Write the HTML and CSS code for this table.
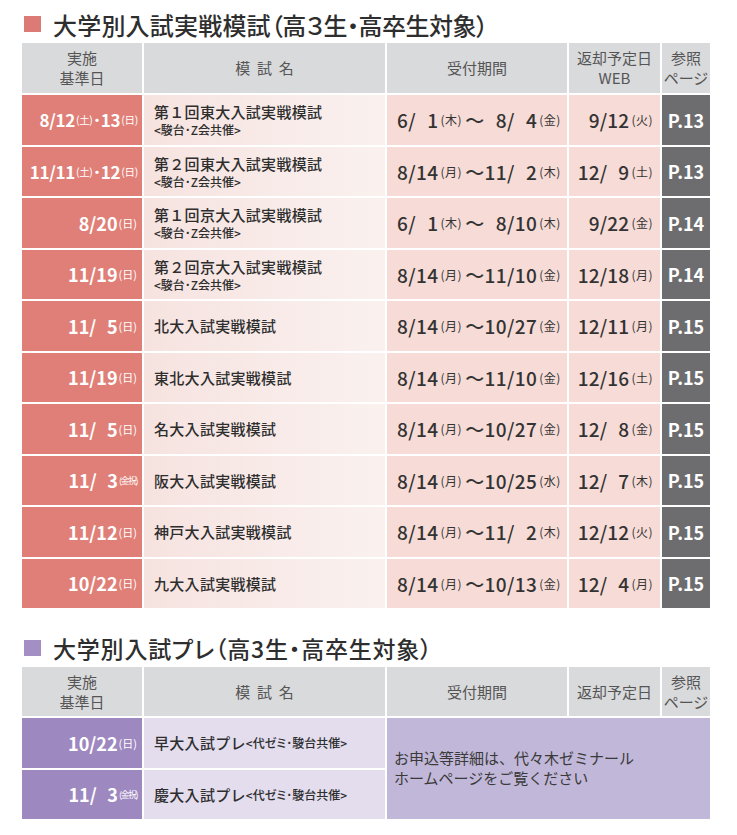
FILE: index.html
```html
<!DOCTYPE html>
<html lang="ja">
<head>
<meta charset="utf-8">
<link rel="stylesheet" href="styles.css">
</head>
<body>
<h2 class="title"><span class="sq sq-red"></span>大学別入試実戦模試<span class="paren">（高３生・高卒生対象）</span></h2>
<div class="grid grid-red">
  <div class="hd">実施<br>基準日</div>
  <div class="hd">模&nbsp;&nbsp;試&nbsp;&nbsp;名</div>
  <div class="hd">受付期間</div>
  <div class="hd">返却予定日<br>WEB</div>
  <div class="hd">参照<br>ページ</div>

  <div class="dt long">8/12<small>(土)</small>･13<small>(日)</small></div>
  <div class="nm"><b>第１回東大入試実戦模試</b><small>&lt;駿台･Z会共催&gt;</small></div>
  <div class="rc">6/&#8199;1<small>(木)</small>～&#8199;8/&#8199;4<small>(金)</small></div>
  <div class="rt">9/12<small>(火)</small></div>
  <div class="pg">P.13</div>

  <div class="dt long">11/11<small>(土)</small>･12<small>(日)</small></div>
  <div class="nm"><b>第２回東大入試実戦模試</b><small>&lt;駿台･Z会共催&gt;</small></div>
  <div class="rc">8/14<small>(月)</small>～11/&#8199;2<small>(木)</small></div>
  <div class="rt">12/&#8199;9<small>(土)</small></div>
  <div class="pg">P.13</div>

  <div class="dt">8/20<small>(日)</small></div>
  <div class="nm"><b>第１回京大入試実戦模試</b><small>&lt;駿台･Z会共催&gt;</small></div>
  <div class="rc">6/&#8199;1<small>(木)</small>～&#8199;8/10<small>(木)</small></div>
  <div class="rt">9/22<small>(金)</small></div>
  <div class="pg">P.14</div>

  <div class="dt">11/19<small>(日)</small></div>
  <div class="nm"><b>第２回京大入試実戦模試</b><small>&lt;駿台･Z会共催&gt;</small></div>
  <div class="rc">8/14<small>(月)</small>～11/10<small>(金)</small></div>
  <div class="rt">12/18<small>(月)</small></div>
  <div class="pg">P.14</div>

  <div class="dt">11/&#8199;5<small>(日)</small></div>
  <div class="nm"><b>北大入試実戦模試</b></div>
  <div class="rc">8/14<small>(月)</small>～10/27<small>(金)</small></div>
  <div class="rt">12/11<small>(月)</small></div>
  <div class="pg">P.15</div>

  <div class="dt">11/19<small>(日)</small></div>
  <div class="nm"><b>東北大入試実戦模試</b></div>
  <div class="rc">8/14<small>(月)</small>～11/10<small>(金)</small></div>
  <div class="rt">12/16<small>(土)</small></div>
  <div class="pg">P.15</div>

  <div class="dt">11/&#8199;5<small>(日)</small></div>
  <div class="nm"><b>名大入試実戦模試</b></div>
  <div class="rc">8/14<small>(月)</small>～10/27<small>(金)</small></div>
  <div class="rt">12/&#8199;8<small>(金)</small></div>
  <div class="pg">P.15</div>

  <div class="dt">11/&#8199;3<small class="cx">(金祝)</small></div>
  <div class="nm"><b>阪大入試実戦模試</b></div>
  <div class="rc">8/14<small>(月)</small>～10/25<small>(水)</small></div>
  <div class="rt">12/&#8199;7<small>(木)</small></div>
  <div class="pg">P.15</div>

  <div class="dt">11/12<small>(日)</small></div>
  <div class="nm"><b>神戸大入試実戦模試</b></div>
  <div class="rc">8/14<small>(月)</small>～11/&#8199;2<small>(木)</small></div>
  <div class="rt">12/12<small>(火)</small></div>
  <div class="pg">P.15</div>

  <div class="dt">10/22<small>(日)</small></div>
  <div class="nm"><b>九大入試実戦模試</b></div>
  <div class="rc">8/14<small>(月)</small>～10/13<small>(金)</small></div>
  <div class="rt">12/&#8199;4<small>(月)</small></div>
  <div class="pg">P.15</div>
</div>

<h2 class="title title2"><span class="sq sq-purple"></span>大学別入試プレ（高3生・高卒生対象）</h2>
<div class="grid grid-purple">
  <div class="hd">実施<br>基準日</div>
  <div class="hd">模&nbsp;&nbsp;試&nbsp;&nbsp;名</div>
  <div class="hd">受付期間</div>
  <div class="hd">返却予定日</div>
  <div class="hd">参照<br>ページ</div>

  <div class="dt">10/22<small>(日)</small></div>
  <div class="nm nm-inline"><b>早大入試プレ</b><small>&lt;代ゼミ･駿台共催&gt;</small></div>
  <div class="merged">お申込等詳細は、代々木ゼミナール<br>ホームページをご覧ください</div>

  <div class="dt">11/&#8199;3<small class="cx">(金祝)</small></div>
  <div class="nm nm-inline"><b>慶大入試プレ</b><small>&lt;代ゼミ･駿台共催&gt;</small></div>
</div>
</body>
</html>
```
FILE: styles.css
```css
* { box-sizing: border-box; }
html, body { margin: 0; padding: 0; background: #ffffff; }
body {
  width: 737px;
  padding: 8px 0 0 22px;
  font-family: "Noto Sans CJK JP", "Noto Sans", sans-serif;
  color: #333333;
}
.title {
  display: flex;
  align-items: center;
  margin: 0 0 3px 0;
  height: 32px;
  font-size: 24px;
  font-weight: 500;
  color: #2e2e2e;
  letter-spacing: 0.2px;
  white-space: nowrap;
}
.title .paren { font-feature-settings: "palt"; letter-spacing: -0.5px; }
.title2 {
  margin-top: 24px;
  font-size: 23px;
  letter-spacing: 0.8px;
  font-feature-settings: "palt";
}
.sq {
  display: inline-block;
  width: 17px;
  height: 16px;
  margin: 0 12px 0 2px;
}
.sq-red { background: #dc7b75; }
.sq-purple { background: #a38fc4; }

.grid {
  display: grid;
  width: 688px;
  grid-template-columns: 120px 241px 180px 91px 48px;
  gap: 2px;
}
.grid-red { grid-template-rows: 50px repeat(10, 49.5px); }
.grid-purple { grid-template-rows: 49px 49.5px 49.5px; }

.hd {
  background: #d9dadc;
  color: #555555;
  font-size: 15px;
  line-height: 20px;
  font-weight: 400;
  display: flex;
  align-items: center;
  justify-content: center;
  text-align: center;
}
.dt {
  color: #ffffff;
  font-size: 18px;
  font-weight: 700;
  display: flex;
  align-items: center;
  justify-content: flex-end;
  padding-right: 5px;
  white-space: nowrap;
}
.dt small { font-size: 11px; font-weight: 400; margin-left: 1px; }
.dt small.cx { font-size: 9px; letter-spacing: -1.5px; }
.dt.long { font-size: 17px; letter-spacing: -0.3px; padding-right: 4px; }
.dt.long small { font-size: 10.5px; letter-spacing: -0.3px; }
.grid-red .dt { background: #e07f77; }
.grid-purple .dt { background: #9e88c0; }

.nm {
  display: flex;
  flex-direction: column;
  justify-content: center;
  padding-left: 10px;
  color: #2e2e2e;
  white-space: nowrap;
}
.grid-red .nm { background: linear-gradient(to right, #f6e3e0, #faf1ef); }
.nm b { font-size: 15px; font-weight: 500; line-height: 19px; letter-spacing: 0.3px; }
.nm small { font-size: 12px; font-weight: 500; line-height: 15px; margin-top: 1px; font-feature-settings: "palt"; }
.nm-inline { flex-direction: row; align-items: center; justify-content: flex-start; }
.nm-inline small { font-size: 12px; margin-top: 0; }
.grid-purple .nm { background: #e3ddee; }

.rc, .rt {
  background: #f6dbd6;
  display: flex;
  align-items: center;
  font-size: 19px;
  font-weight: 500;
  color: #333333;
  white-space: nowrap;
}
.rc { padding-left: 10px; letter-spacing: 0.4px; }
.rt { justify-content: flex-end; padding-right: 7px; letter-spacing: 0.2px; }
.rc small, .rt small { font-size: 12px; font-weight: 400; margin: 0 3px 0 2px; letter-spacing: 0.5px; }
.rt small { margin-right: 0; }

.pg {
  background: #6d6d6f;
  color: #ffffff;
  font-size: 18px;
  font-weight: 700;
  display: flex;
  align-items: center;
  justify-content: center;
}

.merged {
  grid-column: 3 / 6;
  grid-row: 2 / 4;
  background: #c1b7d8;
  color: #3a3a3a;
  font-size: 15px;
  line-height: 20px;
  display: flex;
  align-items: center;
  padding: 0 0 2px 7px;
}
```
